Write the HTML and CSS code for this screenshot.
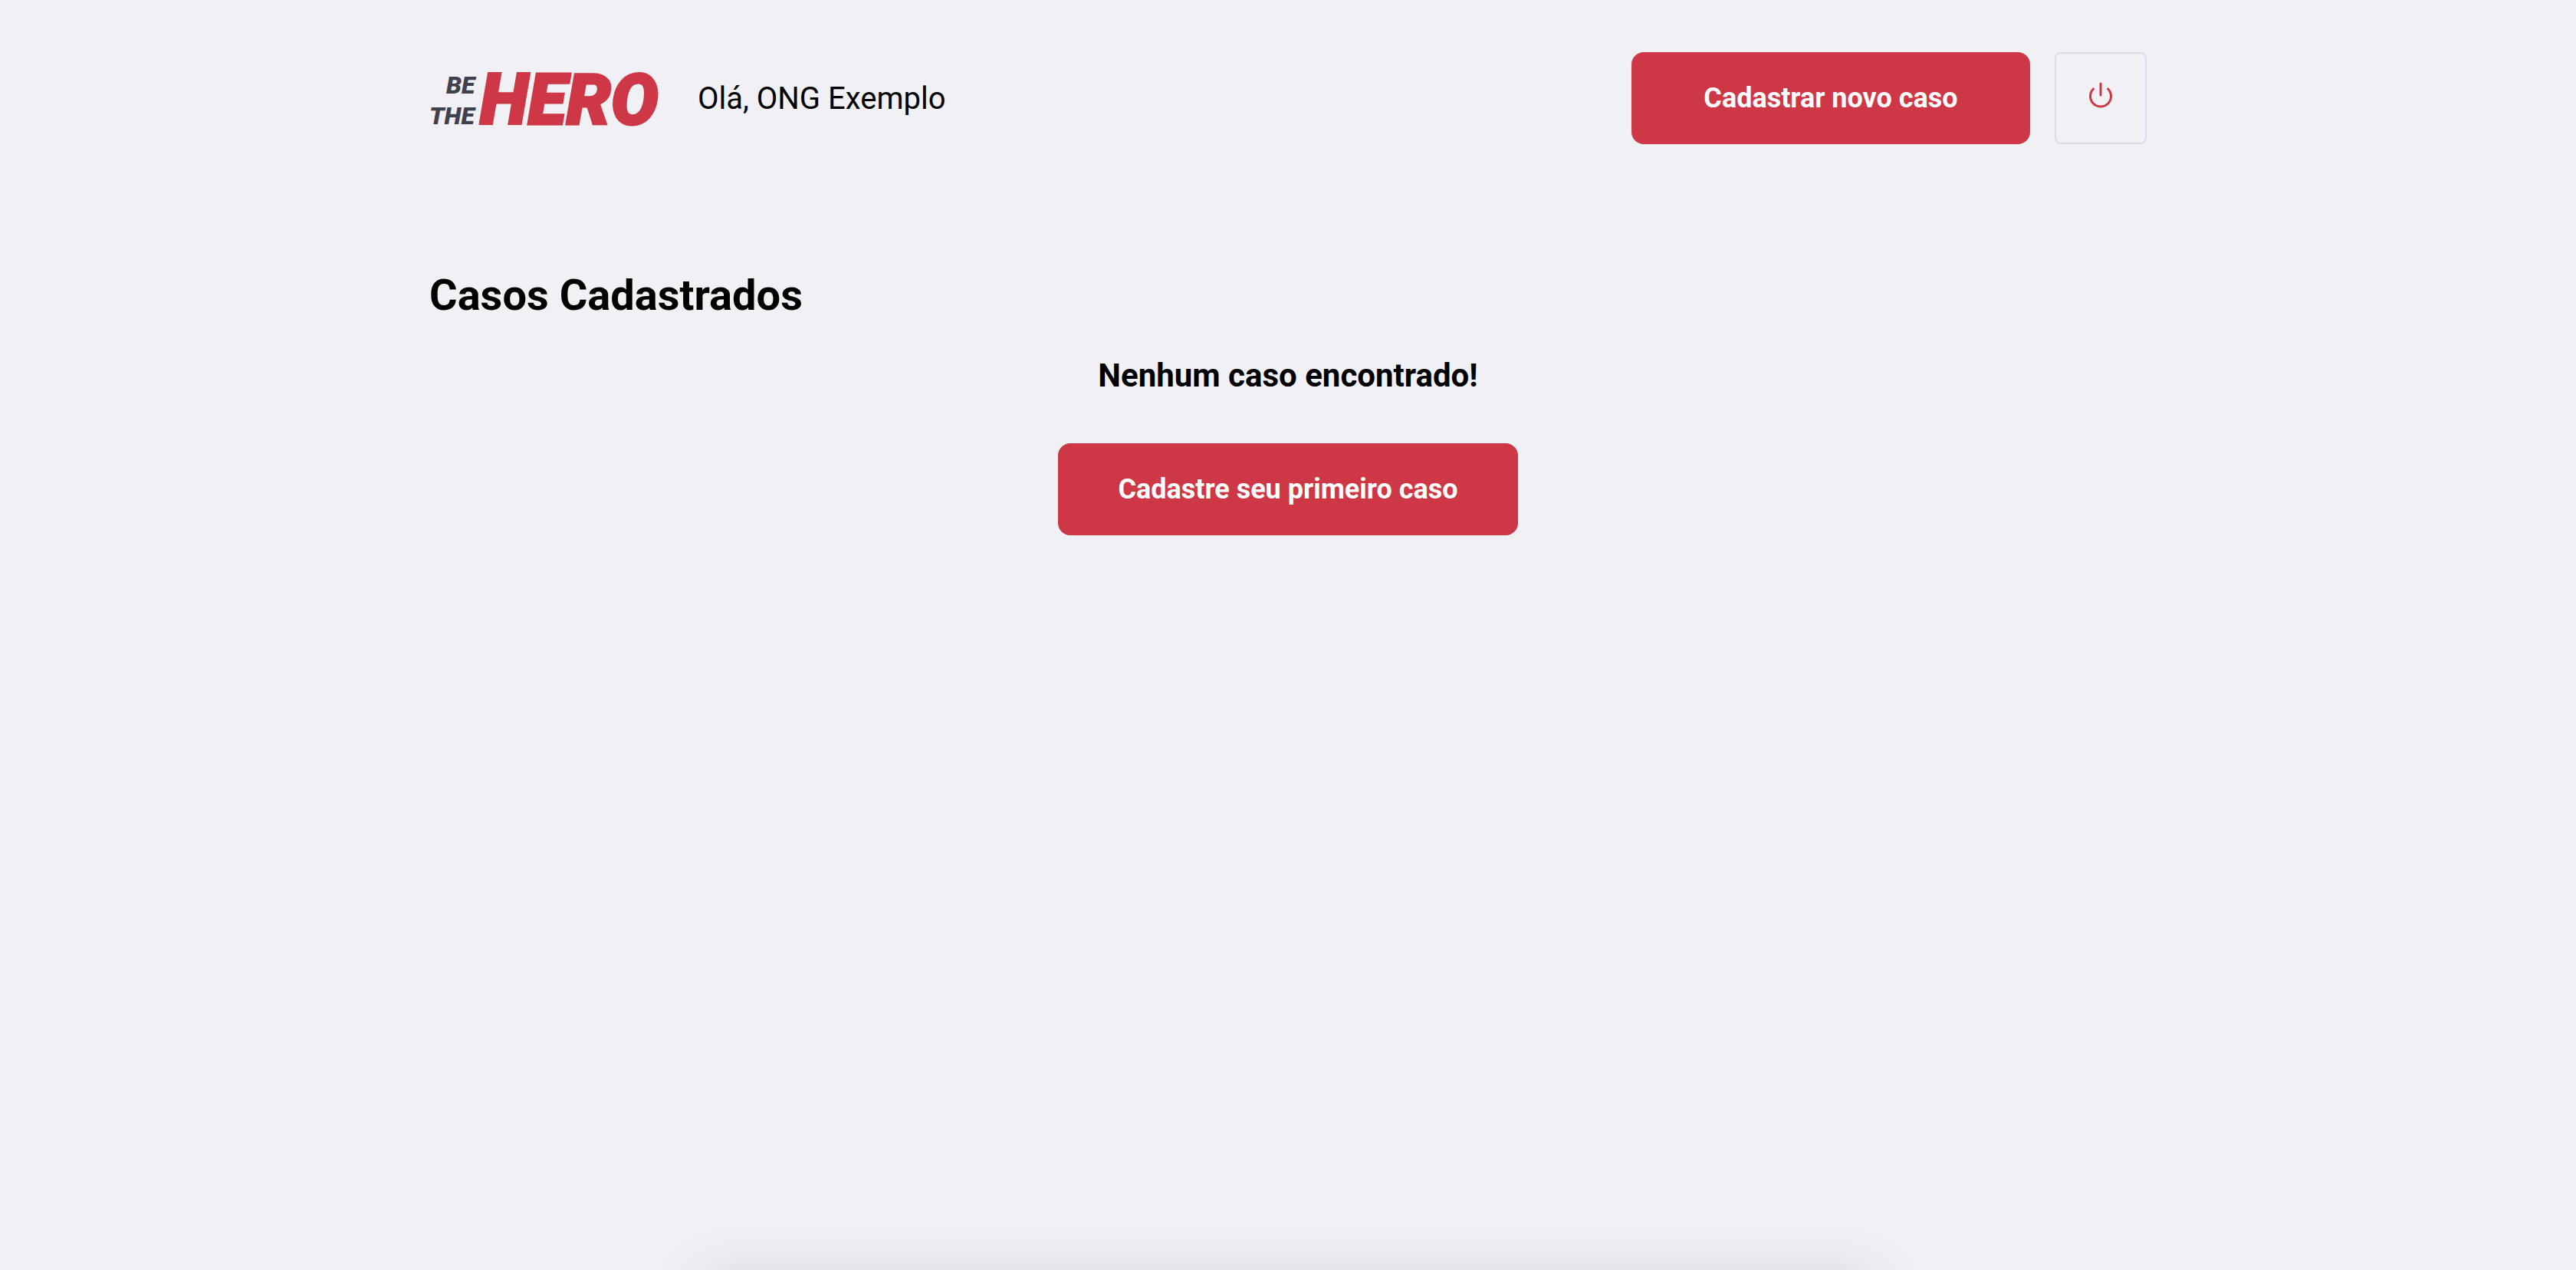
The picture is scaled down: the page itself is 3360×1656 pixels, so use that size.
FILE: index.html
```html
<!DOCTYPE html>
<html lang="pt-BR">
<head>
<meta charset="utf-8">
<meta name="viewport" content="width=device-width, initial-scale=1">
<title>Be The Hero</title>
<link rel="stylesheet" href="styles.css">
</head>
<body>
<div class="profile">
  <header class="header">
    <svg class="logo" viewBox="0 0 302 128" role="img" aria-label="Be The Hero">
      <g class="logo-small">
        <text x="22" y="58">BE</text>
        <text x="0" y="98">THE</text>
      </g>
      <text class="logo-large" x="66" y="98">HERO</text>
    </svg>
    <span class="greeting">Olá, ONG Exemplo</span>
    <a class="button button-new" href="#novo">Cadastrar novo caso</a>
    <button class="logout" type="button" aria-label="Sair">
      <svg class="icon" viewBox="0 0 24 24" aria-hidden="true">
        <path d="M18.36 6.64a9 9 0 1 1-12.73 0"/>
        <line x1="12" y1="2" x2="12" y2="12"/>
      </svg>
    </button>
  </header>
  <main class="cases">
    <h1 class="title">Casos Cadastrados</h1>
    <section class="empty">
      <h2 class="empty-title">Nenhum caso encontrado!</h2>
      <a class="button button-first" href="#novo">Cadastre seu primeiro caso</a>
    </section>
  </main>
</div>
<div class="drawer" aria-hidden="true"></div>
</body>
</html>
```
FILE: styles.css
```css
* {
  box-sizing: border-box;
  margin: 0;
  padding: 0;
}

body {
  min-height: 100vh;
  background: #f0f0f5;
  color: #000;
  font-family: Roboto, "Liberation Sans", sans-serif;
  -webkit-font-smoothing: antialiased;
}

.profile {
  max-width: 2360px;
  margin: 0 auto;
  padding: 64px 60px;
}

.header {
  display: flex;
  align-items: center;
}

.logo {
  flex: none;
  width: 302px;
  height: 128px;
  overflow: visible;
  font-family: Roboto, "Liberation Sans", sans-serif;
  font-weight: 900;
  font-style: italic;
}

.logo-small {
  fill: #41414d;
  font-size: 32px;
}

.logo-large {
  fill: #ce3746;
  stroke: #ce3746;
  stroke-width: 3px;
  font-size: 92px;
}

.greeting {
  margin-left: 48px;
  font-size: 40px;
}

.button {
  display: block;
  height: 120px;
  border-radius: 16px;
  background: #ce3746;
  color: #fff;
  font-size: 36px;
  font-weight: 700;
  line-height: 120px;
  text-align: center;
  text-decoration: none;
}

.button-new {
  width: 520px;
  margin-left: auto;
}

.button-first {
  width: 600px;
}

.logout {
  display: flex;
  align-items: center;
  justify-content: center;
  width: 120px;
  height: 120px;
  margin-left: 32px;
  padding-bottom: 8px;
  border: 2px solid #dcdce6;
  border-radius: 8px;
  background: transparent;
  cursor: pointer;
}

.icon {
  width: 36px;
  height: 36px;
  fill: none;
  stroke: #ce3746;
  stroke-width: 2;
  stroke-linecap: round;
  stroke-linejoin: round;
}

.title {
  margin-top: 160px;
  font-size: 56px;
  line-height: 66px;
}

.empty {
  display: flex;
  flex-direction: column;
  align-items: center;
  gap: 64px;
  margin-top: 48px;
}

.empty-title {
  font-size: 42px;
  line-height: 48px;
}

.drawer {
  position: fixed;
  top: 100%;
  right: 0;
  left: 0;
  width: 1530px;
  height: 200px;
  margin: 0 auto;
  box-shadow: 0 8px 80px rgba(0, 0, 0, 0.12);
}
```
